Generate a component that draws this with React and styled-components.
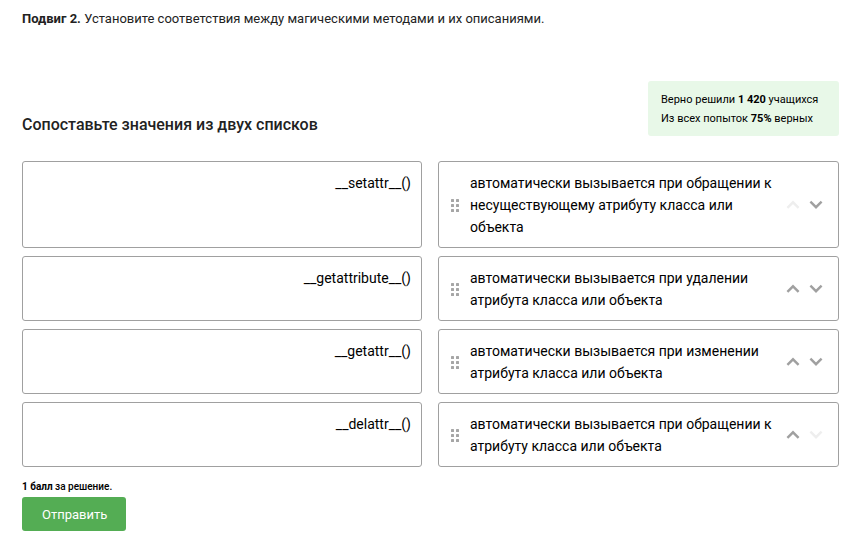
import React from 'react';
import styled, { createGlobalStyle } from 'styled-components';

const Global = createGlobalStyle`
  * { box-sizing: border-box; }
  body { margin: 0; background: #fff; color: #222; font-family: Roboto, sans-serif; }
`;
const Page = styled.main`padding: 8px 26px 11px 22px;`;
const Intro = styled.p`margin: 0; font-size: 13px; line-height: 21px;`;
const Header = styled.header`
  display: flex; justify-content: space-between; align-items: flex-end;
  margin-top: 52px;
`;
const Title = styled.h2`margin: 0; font-size: 16px; line-height: 22px; font-weight: 500;`;
const Stats = styled.aside`
  min-width: 191px; padding: 9px 12px 8px 13px; border-radius: 3px; background: #e8f8e8;
  font-size: 11px; line-height: 19px; color: #000;
`;
const StatLine = styled.div``;
const Pairs = styled.div`
  display: grid; grid-template-columns: 400fr 401fr; gap: 8px 16px; margin-top: 25px;
  font-size: 14px; line-height: 22px; color: #000;
`;
const Cell = styled.div`
  border: 1px solid #a0a0a0; border-radius: 3px; padding: 10px 10px 9px;
  display: flex;
`;
const Term = styled(Cell)`justify-content: flex-end; align-items: flex-start;`;
const Option = styled(Cell)`align-items: center;`;
const Description = styled.span`flex: 1; margin: 0 10px 0 11px;`;
const Grip = styled.svg`width: 8px; height: 13px; fill: #a6a6a6; flex: none; margin-left: 2px;`;
const Arrows = styled.div`display: flex; gap: 9px; margin-right: 5px;`;
const Arrow = styled.button`
  border: 0; padding: 0; background: none; width: 14px; height: 14px; color: #a0a0a0;
  &:disabled { color: #eee; }
  svg { display: block; }
`;
const Points = styled.p`margin: 14px 0 4px; font-size: 10px; line-height: 12px; font-weight: 500; color: #000;`;
const Submit = styled.button`
  height: 34px; padding: 0 19px 0 20px; border: 0; border-radius: 3px;
  background: #54ad54; color: #fff; font: 13px Roboto, sans-serif;
`;

const rows = [
  ['__setattr__()', 'автоматически вызывается при обращении к несуществующему атрибуту класса или объекта'],
  ['__getattribute__()', 'автоматически вызывается при удалении атрибута класса или объекта'],
  ['__getattr__()', 'автоматически вызывается при изменении атрибута класса или объекта'],
  ['__delattr__()', 'автоматически вызывается при обращении к атрибуту класса или объекта'],
];

function Chevron({ down }) {
  return (
    <svg width="14" height="14" viewBox="0 0 14 14" fill="none" stroke="currentColor" strokeWidth="2.4">
      <path d={down ? 'M1.4 3.7 7 9.2l5.6-5.5' : 'M1.4 9.8 7 4.3l5.6 5.5'} />
    </svg>
  );
}
function Dots() {
  return (
    <Grip viewBox="0 0 8 13" aria-hidden="true">
      {[0, 5, 10].map((y) => [0, 5].map((x) => <rect key={`${x}${y}`} x={x} y={y} width="3" height="3" rx="0.5" />))}
    </Grip>
  );
}

export default function App() {
  return (
    <Page>
      <Global />
      <Intro><b>Подвиг 2.</b> Установите соответствия между магическими методами и их описаниями.</Intro>
      <Header>
        <Title>Сопоставьте значения из двух списков</Title>
        <Stats>
          <StatLine>Верно решили <b>1 420</b> учащихся</StatLine>
          <StatLine>Из всех попыток <b>75%</b> верных</StatLine>
        </Stats>
      </Header>
      <Pairs>
        {rows.map(([term, text], i) => (
          <React.Fragment key={term}>
            <Term>{term}</Term>
            <Option>
              <Dots />
              <Description>{text}</Description>
              <Arrows>
                <Arrow type="button" aria-label="Переместить вверх" disabled={i === 0}><Chevron /></Arrow>
                <Arrow type="button" aria-label="Переместить вниз" disabled={i === rows.length - 1}><Chevron down /></Arrow>
              </Arrows>
            </Option>
          </React.Fragment>
        ))}
      </Pairs>
      <Points><b>1 балл</b> за решение.</Points>
      <Submit type="button">Отправить</Submit>
    </Page>
  );
}
